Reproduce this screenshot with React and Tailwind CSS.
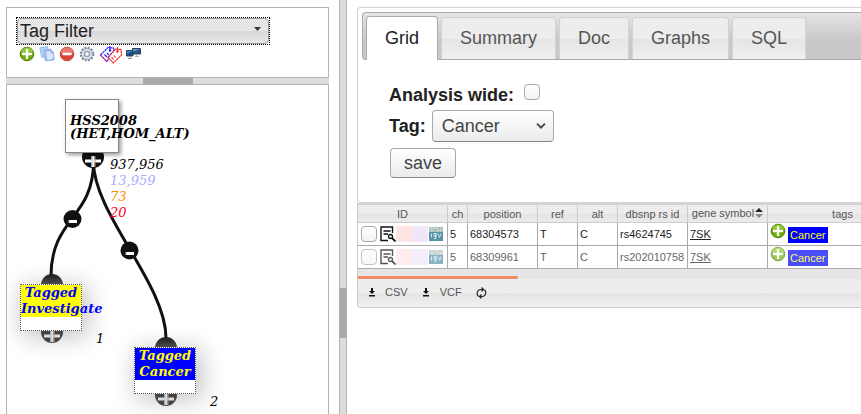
import React from "react";

const sans = "font-['Liberation_Sans',Arial,sans-serif]";
const serif = "font-['DejaVu_Serif',serif]";

function AddIcon({ className = "" }) {
  return (
    <svg viewBox="0 0 16 16" className={"size-4 shrink-0 " + className} aria-hidden="true">
      <circle cx="8" cy="8" r="6.8" fill="#6fae0a" stroke="#4c7d0b" strokeWidth="1" />
      <path d="M2 7a6 5.5 0 0 1 12 0c-4-1.500-8-1.500-12 0z" fill="#8fca35" />
      <path d="M8 4v8M4 8h8" stroke="#fff" strokeWidth="2.400" strokeLinecap="round" />
    </svg>
  );
}

function RemoveIcon() {
  return (
    <svg viewBox="0 0 16 16" className="size-4" aria-hidden="true">
      <circle cx="8" cy="8" r="6.800" fill="#dd4537" stroke="#c4463c" />
      <path d="M2 7a6 5.500 0 0 1 12 0z" fill="#ee7a6c" />
      <path d="M4.500 8h7" stroke="#fff" strokeWidth="2.600" strokeLinecap="round" />
    </svg>
  );
}

function CopyIcon() {
  return (
    <svg viewBox="0 0 16 16" className="size-4" aria-hidden="true">
      <path d="M.8 1.800L8.500.6l1.500 9.600-7.200 1.200z" fill="#b4d1f8" stroke="#8badea" strokeWidth=".8" />
      <path d="M4.500 4.200l7.500-1.100 1.600 10-7.400 1.200z" fill="#c3dafb" stroke="#7aa0e4" strokeWidth=".8" />
      <path d="M6.500 5.200l6-.8 2 1.800.6 7.300-7.300 1.300z" fill="#d8e7fd" stroke="#7597dc" strokeWidth=".8" />
      <path d="M12 4.800l.4 2 2 .1M15 12.500l-2.500 2" fill="#fff" stroke="#5f81c8" strokeWidth=".8" />
    </svg>
  );
}

function GearIcon() {
  return (
    <svg viewBox="0 0 16 16" className="size-4" aria-hidden="true">
      <circle cx="8" cy="8" r="6.300" fill="none" stroke="#6d7b8e" strokeWidth="2" strokeDasharray="1.800 1.500" />
      <circle cx="8" cy="8" r="4.200" fill="none" stroke="#7a899e" strokeWidth="3.400" />
      <circle cx="8" cy="8" r="4.200" fill="none" stroke="#d5dde7" strokeWidth="2.400" />
      <circle cx="8" cy="8" r="2.300" fill="#fff" stroke="#75849a" strokeWidth=".8" />
    </svg>
  );
}

function TagsIcon() {
  return (
    <svg viewBox="0 0 24 20" className="h-5 w-6" fill="#fff" aria-hidden="true">
      <path d="M1.500 11L9 3.500l5.500.5.500 4.500-7.500 9z" stroke="#2222ff" strokeWidth="1.200" strokeDasharray="2.500 .5" />
      <path d="M1.500 11l6 6.500" stroke="#ff3333" />
      <path d="M5.500 10.500l2.500 2.500M8 9l2 2M11 2v4" stroke="#2222ff" strokeWidth="1.200" />
      <circle cx="11" cy="6.500" r="1.200" fill="#2222ff" />
      <path d="M9 13.500L16.500 5l5.500.5.500 5.500-8 8z" stroke="#ff2222" strokeWidth="1.200" strokeDasharray="2.500 .5" />
      <path d="M9.500 13l6-7" stroke="#2222ff" strokeDasharray="2 2" />
      <path d="M12.500 13l2 2.500M15 11.500l1.500 2M18.500 3v4" stroke="#ff2222" strokeWidth="1.200" />
      <circle cx="18.500" cy="7.500" r="1.200" fill="#ff2222" />
    </svg>
  );
}

function MonitorsIcon() {
  return (
    <svg viewBox="0 0 16 16" className="-ml-0.5 size-4" aria-hidden="true">
      <path d="M7.500 2.500h8v5.500h-8z" fill="#1d568d" stroke="#333f4d" />
      <path d="M8 3h7L8 6z" fill="#5a97c8" />
      <path d="M11.500 8.500v2M10 10.500h4" stroke="#a5afb8" />
      <path d="M1.500 4.500h6.500v5.500h-6.500z" fill="#164b80" stroke="#2d4359" />
      <path d="M2 5h5.500L2 8z" fill="#4485bb" />
      <path d="M4.800 10.500v2M3 12.500h4" stroke="#8b96a0" />
    </svg>
  );
}

function InspectIcon() {
  return (
    <svg viewBox="0 0 16 16" className="size-4 shrink-0" fill="none" stroke="#111" aria-hidden="true">
      <path d="M8 14.500H1V1h11.500v6M3.500 5h7M3.500 8H8" strokeWidth="1.400" />
      <circle cx="10.500" cy="10.500" r="2" strokeWidth="1.300" />
      <path d="M12 12l3.500 3.500" strokeWidth="1.800" />
    </svg>
  );
}

function IgvIcon() {
  return (
    <svg viewBox="0 0 14 14" className="ml-px size-3.5 shrink-0" aria-hidden="true">
      <path d="M0 0h14v14H0z" fill="#5594a9" />
      <path d="M0 0h14v5H0z" fill="#a5c3cb" />
      <path d="M1 1.500h12M2 3.500h11" stroke="#e6e3c5" strokeDasharray="2 1" />
      <path d="M9 1.500h2M5 3.500h2" stroke="#e2a65b" />
      <path d="M2.500 6.500v4M7 6.500H5v3h2zv5H5M9 6.500l1.500 4 1.500-4" fill="none" stroke="#cfe3e8" />
    </svg>
  );
}

function DownloadIcon() {
  return (
    <svg viewBox="0 0 8 9" className="h-[9px] w-2" aria-hidden="true">
      <path d="M3 0h2v3h2L4 6 1 3h2zM1 7h6v1.500H1z" fill="#111" />
    </svg>
  );
}

function RefreshIcon() {
  return (
    <svg viewBox="0 0 11 12" className="h-3 w-[11px]" fill="none" stroke="#222" strokeWidth="1.200" aria-hidden="true">
      <path d="M2.500 9.500A4 4 0 0 1 1.200 6.500 4 4 0 0 1 5 2.500H7M8.500 2.800A4 4 0 0 1 9.800 5.800 4 4 0 0 1 6 9.500H4" />
      <path d="M5.500.5l2 2-2 2M5.500 7.500l-2 2 2 2" />
    </svg>
  );
}

function PlusMark({ x, y, fill }) {
  return (
    <g>
      <path d={`M${x - 8} ${y}h16M${x} ${y - 5}v11`} stroke={fill} strokeWidth="3" />
      <path d={`M${x - 1} ${y - 5}v11`} stroke="#8cc8f4" strokeWidth="1" />
      <path d={`M${x + 2} ${y - 5}v11`} stroke="#c98c5c" strokeWidth="1" />
    </g>
  );
}

function FilterTree() {
  const shadow = "shadow-[4px_4px_24px_2px_rgba(0,0,0,0.24)]";
  return (
    <div className={"relative min-h-[329px] flex-1 overflow-hidden italic text-[13px] " + serif}>
      <div className={"absolute left-[13px] top-[199px] h-[47px] w-[62px] " + shadow} />
      <div className={"absolute left-[127px] top-[262px] h-[47px] w-[62px] " + shadow} />
      <svg viewBox="7 85 321 329" width="321" height="329" className="absolute left-0 top-0" aria-hidden="true">
        <defs>
          <linearGradient id="cap" x1="0" y1="0" x2="0" y2="1">
            <stop offset="0" stopColor="#1c1c1c" />
            <stop offset=".5" stopColor="#505050" />
            <stop offset="1" stopColor="#333" />
          </linearGradient>
        </defs>
        <g fill="none" stroke="#111" strokeWidth="3">
          <path d="M93.500 162C93.500 218 51 218 51 276" />
          <path d="M93.500 162C93.500 214 166 284 166 338" />
        </g>
        <circle cx="93" cy="157" r="11" fill="#111" />
        <PlusMark x={93} y={161} fill="#fff" />
        <circle cx="72.5" cy="219" r="9" fill="#111" />
        <path d="M69 221.500h8" stroke="#fff" strokeWidth="3" />
        <path d="M69 220v3" stroke="#8cc8f4" />
        <circle cx="129.5" cy="250.5" r="9" fill="#111" />
        <path d="M126 253.500h8" stroke="#fff" strokeWidth="3" />
        <path d="M126 252v3" stroke="#8cc8f4" />
        <circle cx="52" cy="285" r="11" fill="url(#cap)" />
        <circle cx="52" cy="332" r="11" fill="#444" />
        <PlusMark x={52} y={336} fill="#ddd" />
        <circle cx="166" cy="348" r="11" fill="url(#cap)" />
        <circle cx="166" cy="395" r="11" fill="#444" />
        <PlusMark x={166} y={399} fill="#ddd" />
      </svg>
      <div className="absolute left-[58px] top-[14px] flex h-[54px] w-[54px] items-center border border-[#888] bg-white pl-1 pt-0.5 font-bold leading-[13px] shadow-[2px_2px_4px_rgba(0,0,0,0.4)]">
        <div>HSS2008<br />(HET,HOM_ALT)</div>
      </div>
      <div className="absolute left-[103px] top-[72px] leading-4">
        <div className="text-black">937,956</div>
        <div className="text-[#aaaaff]">13,959</div>
        <div className="text-[#ff8c00]">73</div>
        <div className="text-[#ff0022]">20</div>
      </div>
      <div className="absolute left-[13px] top-[199px] h-[47px] w-[62px] border border-dotted border-[#555] bg-white font-bold leading-4 text-[#0000ff]">
        <div className="bg-[#ffff00] text-center">Tagged<div className="text-left">Investigate</div></div>
      </div>
      <div className="absolute left-[89px] top-[246px] leading-4">1</div>
      <div className="absolute left-[127px] top-[262px] h-[47px] w-[62px] border border-dotted border-[#555] bg-white font-bold leading-4 text-[#ffff00]">
        <div className="bg-[#0000ff] text-center">Tagged<br />Cancer</div>
      </div>
      <div className="absolute left-[203px] top-[309px] leading-4">2</div>
    </div>
  );
}

function LeftColumn() {
  const tools = [
    ["Add", <AddIcon />], ["Copy", <CopyIcon />], ["Remove", <RemoveIcon />], ["Settings", <GearIcon />],
    ["Tags", <TagsIcon />], ["Network", <MonitorsIcon />],
  ];
  return (
    <aside className="ml-1.5 mr-2.5 flex w-[323px] shrink-0 flex-col pt-[7px]">
      <section className="h-[71px] border border-[#b4b4b4] pl-[9px] pt-[9px]">
        <div className="relative w-[254px] border border-dotted border-black">
          <select aria-label="Filter type" className="block h-[26px] w-full appearance-none rounded border border-[#999] bg-linear-to-b from-[#e6e6e6] from-50% via-[#d9d9d9] via-50% to-[#e6e6e6] pl-0.5 text-lg leading-6 text-[#222] outline-none">
            <option>Tag Filter</option>
          </select>
          <svg viewBox="0 0 7 4" className="pointer-events-none absolute right-2 top-[9px] h-1 w-[7px]" aria-hidden="true"><path d="M0 0h7L3.500 4z" fill="#333" /></svg>
        </div>
        <div className="-mt-px flex h-5 items-center gap-1 pl-[3px]">
          {tools.map(([name, icon]) => <button key={name} type="button" aria-label={name} className="block">{icon}</button>)}
        </div>
      </section>
      <div className="flex h-1.5 justify-center bg-[#ddd]"><div className="w-[50px] bg-[#aaa]" /></div>
      <section className="flex flex-1 flex-col border border-b-0 border-[#b4b4b4]"><FilterTree /></section>
    </aside>
  );
}

function Tabs() {
  return (
    <div role="tablist" className="ml-1 mt-1 flex h-12 items-end gap-[3px] rounded-l border border-r-0 border-[#aaa] bg-linear-to-b from-[#e4e4e4] to-[#c8c8c8] to-60% pl-[3px] text-lg leading-6 text-[#555]">
      <button role="tab" aria-selected="true" type="button" className="-mb-px h-11 shrink-0 rounded-t border border-b-0 border-[#aaa] bg-white px-[18px] pb-0.5 text-[#212121]">Grid</button>
      {["Summary", "Doc", "Graphs", "SQL"].map((t) => (
        <button key={t} role="tab" aria-selected="false" type="button" className="h-[42px] shrink-0 rounded-t border border-b-0 border-[#d3d3d3] bg-linear-to-b from-[#ededed] from-50% via-[#e4e4e4] via-50% to-[#f0f0f0] px-[18px] pb-px">{t}</button>
      ))}
    </div>
  );
}

const check = "appearance-none rounded border border-[#aaa] bg-linear-to-b from-white to-[#f3f3f3]";

function TagForm() {
  const control = "rounded border border-[#aaa] border-b-[#888] bg-linear-to-b from-white to-[#ebebeb] text-lg leading-6 text-[#444]";
  return (
    <form className="flex h-[142px] flex-col items-start pl-[31px] pt-[19px] text-lg leading-6 text-[#212121]">
      <div className="flex h-[31px] items-center">
        <label htmlFor="wide" className="pt-px font-bold">Analysis wide:</label>
        <input id="wide" type="checkbox" className={"mb-1.5 ml-2.5 size-4 " + check} />
      </div>
      <div className="flex items-center">
        <label htmlFor="tag" className="font-bold">Tag:</label>
        <div className="relative ml-1.5">
          <select id="tag" className={"block h-8 w-[122px] appearance-none pl-[9px] " + control}><option>Cancer</option></select>
          <svg viewBox="0 0 10 6" className="pointer-events-none absolute right-2 top-[13px] h-1.5 w-2.5" fill="none" stroke="#444" strokeWidth="1.800" aria-hidden="true"><path d="M1 .7l4 4 4-4" /></svg>
        </div>
      </div>
      <button type="button" className={"ml-px mt-1.5 h-[30px] w-[66px] " + control}>save</button>
    </form>
  );
}

const rows = [
  { id: 1, pos: "68304573", rs: "rs4624745" },
  { id: 2, pos: "68309961", rs: "rs202010758" },
];

function Grid() {
  const cell = "border-r border-b border-[#aaa] px-0.5 py-0 whitespace-nowrap";
  const head = "border-r border-b border-[#ccc] p-0 font-normal whitespace-nowrap";
  return (
    <section className="overflow-hidden rounded-bl border-b border-l border-[#c8c8c8]">
      <table className="w-[560px] table-fixed border-separate border-spacing-0 border-t-2 border-[#d3d3d3] text-[11px] leading-4">
        <colgroup>
          <col className="w-[90px]" /><col className="w-5" /><col className="w-[70px]" /><col className="w-10" />
          <col className="w-10" /><col className="w-[70px]" /><col className="w-20" /><col className="w-[150px]" />
        </colgroup>
        <thead className="bg-linear-to-b from-[#ededed] from-50% via-[#e4e4e4] via-50% to-[#ececec] text-[#555]">
          <tr className="h-[18px]">
            <th className={head}>ID</th>
            <th className={head + " overflow-hidden"}>ch</th>
            <th className={head}>position</th>
            <th className={head}>ref</th>
            <th className={head}>alt</th>
            <th className={head}>dbsnp rs id</th>
            <th className={head}>
              <div className="flex h-4 items-start justify-center gap-px leading-[14px]">
                gene symbol
                <svg viewBox="0 0 8 10" className="mt-0.5 h-2.5 w-2" aria-hidden="true"><path d="M4 0l4 4H0z" fill="#222" /><path d="M0 6h8l-4 4z" fill="#888" /></svg>
              </div>
            </th>
            <th className={head}>tags</th>
          </tr>
        </thead>
        <tbody className="bg-white text-[#222]">
          {rows.map((r) => (
            <tr key={r.id} className={r.id === 2 ? "h-[23px] [&>td>*]:opacity-70" : "h-[23px]"}>
              <td className={cell}>
                <div className="flex h-[22px] items-center pl-px">
                  <input type="checkbox" aria-label={"Select " + r.pos} className={"mr-[3px] size-4 shrink-0 " + check} />
                  <InspectIcon />
                  <span className="h-4 w-4 shrink-0 bg-[#ffe4e4]" /><span className="h-4 w-4 shrink-0 bg-[#f0e6fa]" />
                  <IgvIcon />
                </div>
              </td>
              <td className={cell}><span>5</span></td>
              <td className={cell}><span>{r.pos}</span></td>
              <td className={cell}><span>T</span></td>
              <td className={cell}><span>C</span></td>
              <td className={cell}><span>{r.rs}</span></td>
              <td className={cell}><a href="#gene" className="underline">7SK</a></td>
              <td className={cell}>
                <div className="flex h-[22px] items-center gap-0.5">
                  <AddIcon className="mb-1.5" />
                  <span className="mt-0.5 h-4 w-10 bg-[#0000ff] pl-0.5 text-[#ffff00]">Cancer</span>
                </div>
              </td>
            </tr>
          ))}
        </tbody>
      </table>
      <div className="flex h-2.5 items-end bg-[#e6e6e6]"><div className="h-[3px] w-40 rounded-r-sm bg-[#f08c66]" /></div>
      <div className="flex h-7 items-center bg-linear-to-b from-[#ededed] from-50% via-[#e4e4e4] via-50% to-[#f0f0f0] pb-0.5 pl-2.5 text-[11px] leading-4 text-[#555]">
        <button type="button" className="flex items-center gap-[9px]"><DownloadIcon />CSV</button>
        <button type="button" className="ml-3.5 flex items-center gap-2.5"><DownloadIcon />VCF</button>
        <button type="button" aria-label="Refresh" className="ml-3.5 pt-0.5"><RefreshIcon /></button>
      </div>
    </section>
  );
}

export default function App() {
  return (
    <div className={"flex min-h-screen overflow-hidden bg-white " + sans}>
      <LeftColumn />
      <div className="flex w-2 shrink-0 flex-col border-x border-[#b4b4b4] bg-[#ddd]">
        <div className="mt-72 h-[50px] bg-[#aaa]" />
      </div>
      <main className="ml-2.5 min-w-0 flex-1 pt-[7px]">
        <section className="overflow-hidden rounded-l border border-r-0 border-[#d3d3d3]">
          <Tabs />
          <TagForm />
        </section>
        <Grid />
      </main>
    </div>
  );
}
